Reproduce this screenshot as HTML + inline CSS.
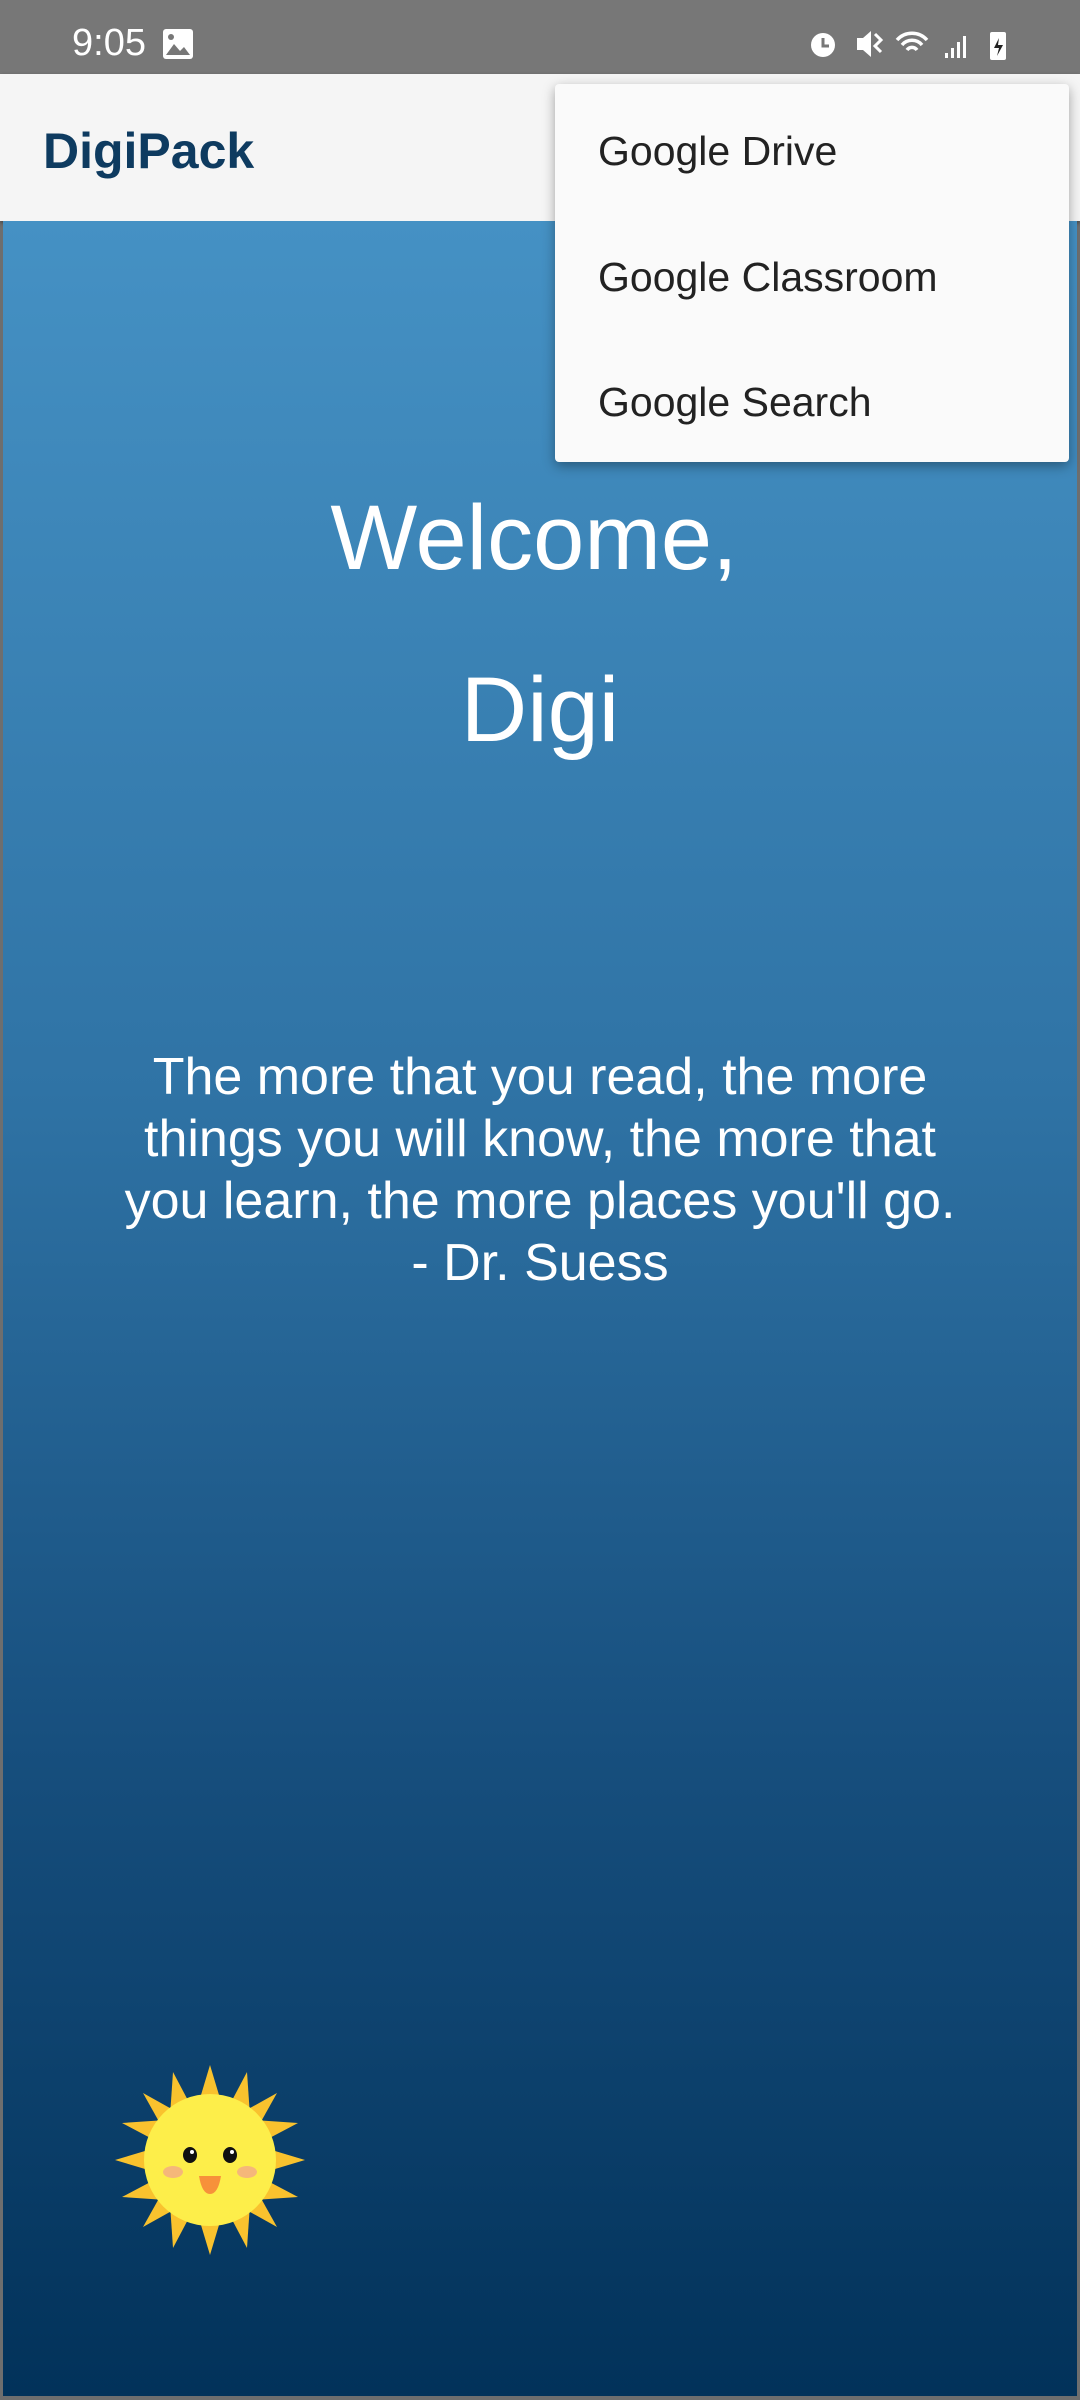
<!DOCTYPE html>
<html><head><meta charset="utf-8"><style>
*{margin:0;padding:0;box-sizing:border-box}
body{width:1080px;height:2400px;overflow:hidden;font-family:"Liberation Sans",sans-serif;background:#6e6e6e;position:relative}
.status{position:absolute;left:0;top:0;width:1080px;height:74px;background:#777;color:#fff}
.status .t{position:absolute;left:72px;top:22px;font-size:38px}
.appbar{position:absolute;left:0;top:74px;width:1080px;height:147px;background:#f5f5f5;box-shadow:0 2px 4px rgba(0,0,0,.4)}
.appbar .title{position:absolute;left:43px;top:48px;font-size:50px;font-weight:bold;color:#0e3b60}
.main{position:absolute;left:3px;top:221px;width:1074px;height:2175px;background:linear-gradient(#4591c4 0%,#2f73a5 40%,#174f7e 70%,#02325a 100%)}
.c{position:absolute;left:0;width:1080px;text-align:center;color:#fff}
.menu{position:absolute;left:555px;top:84px;width:514px;height:378px;background:#fafafa;border-radius:4px;box-shadow:0 4px 12px rgba(0,0,0,.35)}
.menu div{position:absolute;left:43px;font-size:41px;color:#222}
</style></head><body>
<div class="status"><span class="t">9:05</span>
<svg style="position:absolute;left:162px;top:28px" width="32" height="32" viewBox="0 0 32 32"><rect x="1" y="1" width="30" height="30" rx="3" fill="#fff"/><path d="M4 27 L12 16 L18 23 L22 19 L28 27 Z" fill="#777"/><circle cx="9" cy="9" r="3" fill="#777"/></svg>
<svg style="position:absolute;left:805px;top:26px" width="210" height="36" viewBox="0 0 210 36">
<circle cx="18" cy="19" r="12" fill="#fff"/><path d="M18 12v8h6" stroke="#777" stroke-width="3" fill="none"/>
<path d="M52 12h6l8-7v26l-8-7h-6z" fill="#fff"/><path d="M70 8l6 6-6 6 6 6" stroke="#fff" stroke-width="3" fill="none"/>
<path d="M92 14a20 20 0 0 1 30 0M97 19a13 13 0 0 1 20 0M102 24a6 6 0 0 1 10 0" stroke="#fff" stroke-width="3.5" fill="none"/>
<path d="M140 32h3v-5h-3zM146 32h3v-10h-3zM152 32h3v-16h-3zM158 32h3v-22h-3z" fill="#fff"/>
<rect x="185" y="6" width="16" height="28" rx="2" fill="#fff"/><path d="M194 12l-5 10h5l-2 8 6-11h-5z" fill="#222"/>
</svg>
</div>
<div class="appbar"><div class="title">DigiPack</div></div>
<div class="main"></div>
<div class="c" style="top:486px;font-size:92px;left:-6px">Welcome,</div>
<div class="c" style="top:658px;font-size:92px">Digi</div>
<div class="c" style="top:1046px;font-size:52px;line-height:62px">The more that you read, the more<br>things you will know, the more that<br>you learn, the more places you'll go.<br>- Dr. Suess</div>
<svg style="position:absolute;left:110px;top:2060px" width="200" height="200" viewBox="0 0 200 200">
<g fill="#f9c22e">
<polygon points="100,5 112,45 88,45"/><polygon points="100,195 112,155 88,155"/>
<polygon points="5,100 45,112 45,88"/><polygon points="195,100 155,112 155,88"/>
<polygon points="33,33 67,52 52,67"/><polygon points="167,167 133,148 148,133"/>
<polygon points="167,33 148,67 133,52"/><polygon points="33,167 52,133 67,148"/>
<polygon points="63,12 82,48 60,56"/><polygon points="137,188 118,152 140,144"/>
<polygon points="137,12 140,56 118,48"/><polygon points="63,188 60,144 82,152"/>
<polygon points="12,63 56,60 48,82"/><polygon points="188,137 144,140 152,118"/>
<polygon points="188,63 152,82 144,60"/><polygon points="12,137 48,118 56,140"/>
</g>
<circle cx="100" cy="100" r="66" fill="#fdee4a"/>
<ellipse cx="80" cy="95" rx="7" ry="8" fill="#111"/><ellipse cx="120" cy="95" rx="7" ry="8" fill="#111"/>
<circle cx="82" cy="92" r="2" fill="#fff"/><circle cx="122" cy="92" r="2" fill="#fff"/>
<ellipse cx="63" cy="112" rx="10" ry="6" fill="#f5b77a"/><ellipse cx="137" cy="112" rx="10" ry="6" fill="#f5b77a"/>
<path d="M89 116 h22 q-3 18 -11 18 q-8 0 -11 -18z" fill="#f7913a"/>
</svg>
<div class="menu">
<div style="top:44px">Google Drive</div>
<div style="top:170px">Google Classroom</div>
<div style="top:295px">Google Search</div>
</div>
</body></html>
